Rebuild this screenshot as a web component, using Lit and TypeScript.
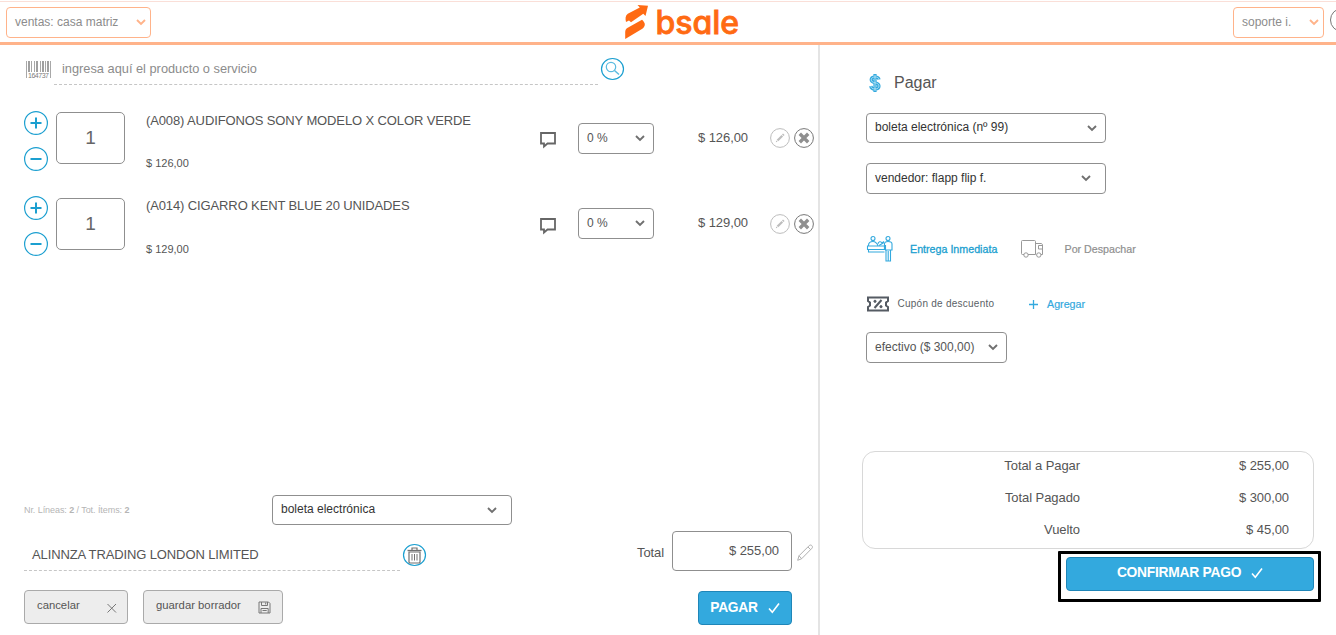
import { LitElement, html, css, svg } from 'lit';
import { customElement, property } from 'lit/decorators.js';

@customElement('pos-select')
export class PosSelect extends LitElement {
  @property({ type: String }) value = '';

  static styles = css`
    :host {
      display: flex;
      align-items: center;
      justify-content: space-between;
      box-sizing: border-box;
      height: 31px;
      padding: 0 8px;
      border: 1px solid #8f8f8f;
      border-radius: 4px;
      background: #fff;
      color: #333;
      font-size: 12px;
      white-space: nowrap;
    }

    .value {
      padding-bottom: 2px;
    }

    .arrow {
      width: 10px;
      height: 7px;
      fill: none;
      stroke: var(--arrow, #707070);
      stroke-width: 1.9;
    }
  `;

  render() {
    return html`
      <span class="value">${this.value}</span>
      <svg class="arrow" viewBox="0 0 10 7"><path d="M1 1l4 4 4-4" /></svg>
    `;
  }
}

const plus = svg`<path d="M12 6.500v11M6.500 12h11" />`;
const minus = svg`<path d="M6.500 12h11" />`;

@customElement('app-root')
export class AppRoot extends LitElement {
  @property({ attribute: false }) items = [
    { name: '(A008) AUDIFONOS SONY MODELO X COLOR VERDE', price: '$ 126,00' },
    { name: '(A014) CIGARRO KENT BLUE 20 UNIDADES', price: '$ 129,00' },
  ];

  @property({ attribute: false }) totals = [
    { label: 'Total a Pagar', value: '$ 255,00' },
    { label: 'Total Pagado', value: '$ 300,00' },
    { label: 'Vuelto', value: '$ 45,00' },
  ];

  static styles = css`
    :host {
      display: flex;
      flex-direction: column;
      width: 1336px;
      height: 635px;
      overflow: hidden;
      background: #fff;
      color: #555;
      font-family: 'Liberation Sans', Arial, sans-serif;
      font-size: 12.8px;
      line-height: 16px;
    }

    * {
      box-sizing: border-box;
    }

    svg {
      display: block;
      flex: none;
      fill: none;
      overflow: visible;
    }

    /* header */
    .header {
      display: grid;
      grid-template-columns: 1fr auto 1fr;
      height: 45px;
      margin: 0;
      padding: 0 0 0 6px;
      border-bottom: 3px solid #ffb38a;
      background: linear-gradient(#fff 1px, #fadfd8 1px, #fadfd8 2px, #fff 2px);
    }

    .header pos-select {
      margin-top: 7px;
      border-color: #ffb38a;
      color: #8c8c8c;
      --arrow: #ffb38a;
    }

    .branch {
      width: 145px;
      padding-right: 4px;
    }

    .logo {
      display: flex;
      gap: 7px;
      padding-top: 5px;
      margin-left: 22px;
    }

    .brand {
      width: 84px;
      color: #ff6a13;
      font-family: Inter, sans-serif;
      font-feature-settings: 'cv11';
      font-size: 32px;
      font-weight: 500;
      line-height: 36px;
      letter-spacing: 0;
      -webkit-text-stroke: 0.8px #ff6a13;
      paint-order: stroke;
      stroke-linejoin: round;
    }

    .account {
      display: flex;
      justify-content: flex-end;
      gap: 6px;
      margin-right: -18px;
    }

    .user {
      width: 91px;
      padding-right: 4px;
    }

    .avatar {
      width: 24px;
      height: 24px;
      margin-top: 8px;
      border: 1px solid #777;
      border-radius: 50%;
    }

    /* columns */
    .main {
      display: flex;
      flex: 1;
      min-height: 0;
    }

    .sale {
      display: flex;
      flex-direction: column;
      width: 820px;
      border-right: 2px solid #e4e4e4;
      padding: 13px 4px 0 24px;
    }

    .search {
      display: flex;
      align-items: flex-start;
      height: 53px;
    }

    .barcode {
      margin: 3px 3px 0 2px;
    }

    .query {
      width: 544px;
      height: 27px;
      margin-right: 3px;
      padding: 3px 8px;
      border-bottom: 1px dashed #c6c6c6;
      color: #8c8c8c;
    }

    .item {
      display: flex;
      align-items: flex-start;
      height: 85.400px;
    }

    .stepper {
      display: flex;
      flex-direction: column;
      gap: 12px;
      width: 32px;
    }

    .round {
      stroke: #1b9fd0;
    }

    .sign {
      stroke-width: 2;
    }

    .qty {
      width: 69px;
      height: 52px;
      margin: 1.200px 21px 0 0;
      border: 1px solid #8f8f8f;
      border-radius: 5px;
      color: #666;
      font-size: 19px;
      line-height: 49px;
      text-align: center;
    }

    .detail {
      width: 394px;
      padding-top: 2px;
    }

    .item-name,
    .name,
    .label {
      font-size: 13px;
      letter-spacing: -0.12px;
    }

    .unit {
      margin-top: 26.300px;
      font-size: 11px;
    }

    .note {
      margin: 21.300px 22px 0 0;
      stroke: #666;
      stroke-width: 1.800;
    }

    .discount {
      width: 76px;
      margin-top: 12px;
      padding-right: 8px;
      color: #555;
    }

    .amount,
    .total,
    .line {
      font-size: 13px;
      letter-spacing: -0.07px;
    }

    .amount {
      width: 94px;
      margin: 18.500px 22px 0 0;
      text-align: right;
    }

    .action {
      margin: 17.400px 4px 0 0;
    }

    .action:last-child {
      margin-right: 0;
    }

    /* sale footer */
    .foot {
      margin-top: auto;
      height: 140px;
    }

    .doc {
      display: flex;
      align-items: center;
      height: 30px;
      margin-bottom: 6px;
    }

    .count {
      width: 248px;
      color: #b5b5b5;
      font-size: 9px;
      letter-spacing: -0.07px;
    }

    .doc pos-select {
      width: 240px;
      height: 30px;
      padding-right: 14px;
    }

    .client {
      display: flex;
      height: 40px;
    }

    .name {
      width: 376px;
      height: 40px;
      margin-right: 3px;
      padding: 16px 8px 0;
      border-bottom: 1px dashed #c6c6c6;
    }

    .trash {
      margin-top: 12.500px;
    }

    .label {
      margin: 14px 8px 0 auto;
      letter-spacing: -0.1px;
    }

    .total {
      width: 120px;
      height: 40px;
      margin-right: 5px;
      padding: 11px 12px;
      border: 1px solid #8f8f8f;
      border-radius: 4px;
      text-align: right;
    }

    .pencil {
      margin: 13px 1px 0 0;
    }

    .buttons {
      display: flex;
      margin-top: 19px;
    }

    .plain {
      display: flex;
      justify-content: space-between;
      height: 34px;
      margin-right: 15px;
      padding: 6px 11px 0 12px;
      border: 1px solid #aaa;
      border-radius: 4px;
      background: #ededed;
      font-size: 11.300px;
    }

    .plain svg {
      margin-top: 4px;
    }

    .cancel {
      width: 104px;
    }

    .draft {
      width: 140px;
    }

    .primary {
      display: flex;
      justify-content: center;
      gap: 10px;
      height: 34px;
      padding-top: 7px;
      border: 1px solid #1f86b8;
      border-radius: 4px;
      background: #33a9de;
      color: #fff;
      font-size: 13.800px;
      font-weight: bold;
      letter-spacing: -0.25px;
    }

    .primary svg {
      margin-top: 2px;
      stroke: #fff;
      stroke-width: 1.6;
    }

    .pay {
      width: 94px;
      margin: 1px 22px 0 auto;
      padding-top: 8px;
    }

    /* payment */
    .payment {
      display: flex;
      flex-direction: column;
      flex: 1;
      padding: 29px 0 0 46px;
    }

    .title {
      display: flex;
      align-items: center;
      gap: 13px;
      height: 18px;
      margin: 0 0 21px 3px;
      font-size: 16px;
      font-weight: normal;
    }

    .receipt {
      width: 240px;
      height: 30px;
    }

    .seller {
      width: 240px;
      margin-top: 20px;
      padding-right: 14px;
    }

    .delivery {
      display: flex;
      align-items: center;
      height: 26px;
      margin: 42px 0 0 1px;
      color: #8f8f8f;
      font-size: 10.700px;
    }

    .now {
      width: 87px;
      margin: 0 24px 0 17px;
      color: #1b9fd0;
      -webkit-text-stroke: 0.3px #1b9fd0;
      white-space: nowrap;
    }

    .later {
      margin-left: 21.500px;
      -webkit-text-stroke: 0.2px #8f8f8f;
    }

    .coupon {
      display: flex;
      align-items: center;
      height: 16px;
      margin: 34px 0 20px 1px;
      color: #5b5f66;
      font-size: 10px;
    }

    .coupon-name {
      width: 131.500px;
      margin-left: 8.500px;
      letter-spacing: 0.25px;
    }

    .add {
      margin-left: 9px;
      color: #33a9de;
      font-size: 10.700px;
      -webkit-text-stroke: 0.2px #33a9de;
    }

    .method {
      width: 141px;
      color: #555;
    }

    .summary {
      width: 452px;
      height: 98px;
      margin: 88px 0 0 -4px;
      padding-top: 6px;
      border: 1px solid #d8d8d8;
      border-radius: 13px;
    }

    .line {
      display: grid;
      grid-template-columns: 217px 209px;
      height: 32px;
      text-align: right;
    }

    .frame {
      width: 263px;
      height: 51px;
      margin: 2px 0 0 192px;
      padding: 3px 4px 0 5px;
      border: 3px solid #000;
      border-radius: 1px;
    }
  `;

  renderItem(item: { name: string; price: string }) {
    return html`
      <div class="item">
        <div class="stepper">
          ${[plus, minus].map(
            (sign) => html`<svg class="round" width="24" height="24">
              <circle cx="12" cy="12" r="11.400" stroke-width="1.200" />
              <g class="sign">${sign}</g>
            </svg>`
          )}
        </div>
        <div class="qty">1</div>
        <div class="detail">
          <div class="item-name">${item.name}</div>
          <div class="unit">${item.price}</div>
        </div>
        <svg class="note" width="16" height="16"><path d="M1 1h14v10.500H7.500L4 14.500v-3H1z" /></svg>
        <pos-select class="discount" value="0 %"></pos-select>
        <div class="amount">${item.price}</div>
        <svg class="action" width="20" height="20">
          <circle cx="10" cy="10" r="9.400" stroke="#bdbdbd" />
          <path d="M7.500 12.500l4.800-4.800" stroke="#bdbdbd" stroke-width="2.200" />
          <path d="M12.800 7.200l1-1" stroke="#bdbdbd" stroke-width="2.200" />
          <path d="M5.800 14.200l.4-1.800 1.400 1.400z" fill="#bdbdbd" />
        </svg>
        <svg class="action" width="20" height="20">
          <circle cx="10" cy="10" r="9.400" stroke="#777" />
          <path d="M5.800 5.800l8.400 8.400M14.200 5.800l-8.400 8.400" stroke="#8f8f8f" stroke-width="3.400" />
        </svg>
      </div>
    `;
  }

  render() {
    const check = svg`<svg width="12" height="12"><path d="M1 6.500l3.300 3.700L11 1.500" /></svg>`;

    return html`
      <div class="header">
        <pos-select class="branch" value="ventas: casa matriz"></pos-select>
        <div class="logo">
          <svg width="24" height="34" viewBox="0 0 24 34">
            <path
              fill="#ff6a13"
              d="M12.500 0L23 .8 20.500 11l-2.200-2.300L6 17.200 4 15.500 1 17C.2 13.500.3 10.500 2.800 8.700L14.800 2.500z"
            />
            <path
              fill="#ff6a13"
              d="M17 14.800c1.400 1.400 3.200 3.200 2.800 5.200-.3 2-1.600 3.300-3.300 4.300L.2 34V27c0-2 .8-3.300 2.500-4.300z"
            />
          </svg>
          <span class="brand">bsale</span>
        </div>
        <div class="account">
          <pos-select class="user" value="soporte i."></pos-select>
          <div class="avatar"></div>
        </div>
      </div>

      <div class="main">
        <div class="sale">
          <div class="search">
            <svg class="barcode" width="25" height="17" fill="none">
              <path
                stroke="#a8a8a8"
                d="M.5 0v17M5.500 0v11M8.500 0v11M14.500 0v11M19.500 0v11M24.500 0v17"
              />
              <path stroke="#a0a0a0" stroke-width="2" d="M3 0v11M11 0v11M17 0v11M22 0v11" />
              <text x="2" y="17" fill="#7c7c7c" font-size="7" textLength="21">164737</text>
            </svg>
            <div class="query">ingresa aquí el producto o servicio</div>
            <svg width="23" height="23" stroke="#1b9fd0">
              <ellipse cx="11.500" cy="11" rx="11" ry="10.500" stroke-width="1.200" />
              <circle cx="10" cy="9" r="4.700" stroke="#5bbbe0" stroke-width="1.200" />
              <path d="M13.500 12.500l4.500 4" stroke="#5bbbe0" stroke-width="1.500" />
            </svg>
          </div>

          ${this.items.map((item) => this.renderItem(item))}

          <div class="foot">
            <div class="doc">
              <div class="count">Nr. Líneas: <b>2</b> / Tot. Ítems: <b>2</b></div>
              <pos-select value="boleta electrónica"></pos-select>
            </div>
            <div class="client">
              <div class="name">ALINNZA TRADING LONDON LIMITED</div>
              <svg class="trash" width="23" height="23">
                <ellipse cx="11.500" cy="11" rx="11" ry="10.500" stroke="#1b9fd0" stroke-width="1.200" />
                <g stroke="#707070">
                  <path d="M4.500 6.500h14" stroke-width="1.300" />
                  <path d="M9 6V4h5v2" stroke-width="1.200" />
                  <path d="M6 8v10c0 .8.500 1 1 1h9c.5 0 1-.2 1-1V8z" stroke-width="1.200" />
                  <path d="M9 10v6.500M11.500 10v6.500M14 10v6.500" />
                </g>
              </svg>
              <div class="label">Total</div>
              <div class="total">$ 255,00</div>
              <svg class="pencil" width="16" height="17" stroke="#b0b0b0">
                <path d="M.7 16.300l1.300-4.500L12.300 1.500c1.700-1.500 4.200 1 2.700 2.700L4.700 14.700zM2 11.800l2.700 2.900M11 3l2.700 2.700" />
              </svg>
            </div>
            <div class="buttons">
              <div class="plain cancel">
                cancelar
                <svg width="9" height="17" stroke="#777"><path d="M.5 3l8.500 8.500M9 3L.5 11.500" /></svg>
              </div>
              <div class="plain draft">
                guardar borrador
                <svg width="13" height="13" stroke="#777">
                  <path d="M1 1h9.500L12 2.500V12H1zM3.500 1v3.500h6V1M3 12V7.500h7.200V12M7.700 1.500v2M4.500 9.500h4.200" />
                </svg>
              </div>
              <div class="primary pay">PAGAR ${check}</div>
            </div>
          </div>
        </div>

        <div class="payment">
          <h1 class="title">
            <svg width="12" height="18" viewBox="0 0 12 18">
              <path
                d="M10 5.500C9.800 3.800 8.200 3 6 3S2.200 4 2.200 5.800 3.800 8.300 6 8.800s4 1.200 4 3.200-1.700 3-4 3-4-1-4.200-3M6 0v18"
                stroke="#33a9de"
                stroke-width="3.200"
              />
              <path
                d="M10 5.500C9.800 3.800 8.200 3 6 3S2.200 4 2.200 5.800 3.800 8.300 6 8.800s4 1.200 4 3.200-1.700 3-4 3-4-1-4.200-3M6 1v16"
                stroke="#c5e8f6"
                stroke-width=".8"
              />
            </svg>
            Pagar
          </h1>
          <pos-select class="receipt" value="boleta electrónica (nº 99)"></pos-select>
          <pos-select class="seller" value="vendedor: flapp flip f."></pos-select>

          <div class="delivery">
            <svg width="26" height="26" stroke="#33a9de" stroke-width="1.100">
              <circle cx="6" cy="2.500" r="2" />
              <circle cx="21" cy="2.500" r="2" />
              <path d="M1.500 9.500C1.500 7 3 5.500 6 5.500s4 2 5 4M.5 10h17v3.500H.5zM1.500 13.500v2.500h16" />
              <path d="M11 8c0-2.500 3-3 4-1l2-1.500M12 9.500l5-3" />
              <path d="M17.500 14V8c0-1.700 1-2.500 3.500-2.500s4 .8 4 2.500v6h-6.500V9M19 14v11h4.500V14M21.200 15v10" />
            </svg>
            <div class="now">Entrega Inmediata</div>
            <svg width="22" height="18" stroke="#999">
              <path d="M3 14.500H1.500c-.7 0-1-.3-1-1v-12c0-.7.300-1 1-1h12c.5 0 1 .3 1 1v13H7M14.500 3.500H20c.8 0 1.500.7 1.500 1.500v9.500h-1.500M21 5.500h-3.500v3.500H21" />
              <circle cx="5" cy="15" r="2.200" />
              <circle cx="17.800" cy="15" r="2.200" />
            </svg>
            <div class="later">Por Despachar</div>
          </div>

          <div class="coupon">
            <svg width="22" height="16" stroke="#555b63" stroke-width="2">
              <path d="M1 5V1.500h20V5l-2 1.500v3l2 1.500v3.500H1V11l2-1.500v-3z" />
              <path d="M14.500 4l-7 8" />
              <circle cx="8" cy="5.300" r="1.100" fill="#555b63" stroke-width="1" />
              <circle cx="14" cy="10.700" r="1.100" fill="#555b63" stroke-width="1" />
            </svg>
            <div class="coupon-name">Cupón de descuento</div>
            <svg width="9" height="9" stroke="#33a9de" stroke-width="1.300"><path d="M4.500 0v9M0 4.500h9" /></svg>
            <div class="add">Agregar</div>
          </div>

          <pos-select class="method" value="efectivo ($ 300,00)"></pos-select>

          <div class="summary">
            ${this.totals.map(
              (t) => html`<div class="line"><span>${t.label}</span><span>${t.value}</span></div>`
            )}
          </div>
          <div class="frame"><div class="primary">CONFIRMAR PAGO ${check}</div></div>
        </div>
      </div>
    `;
  }
}
